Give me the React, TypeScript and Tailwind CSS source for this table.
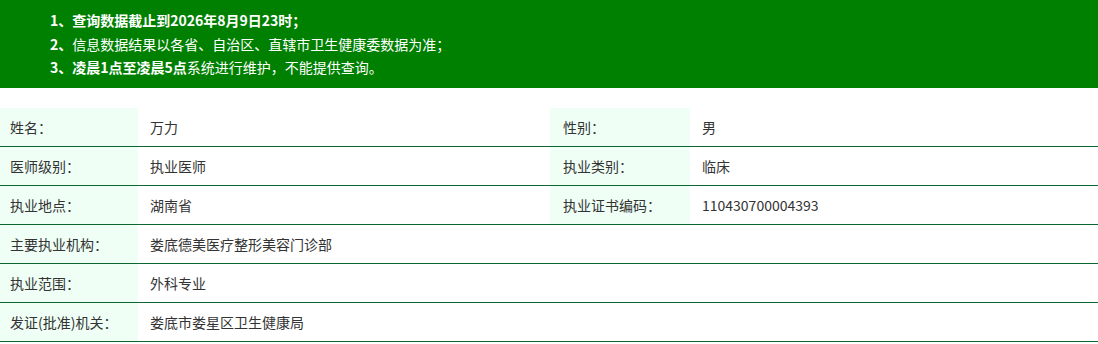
import React from "react";

const font = { fontFamily: '"Noto Sans CJK SC", "Noto Sans", sans-serif' };

type Row =
  | { type: "pair"; l1: string; v1: string; l2: string; v2: string }
  | { type: "single"; l: string; v: string };

const rows: Row[] = [
  { type: "pair", l1: "姓名：", v1: "万力", l2: "性别：", v2: "男" },
  { type: "pair", l1: "医师级别：", v1: "执业医师", l2: "执业类别：", v2: "临床" },
  { type: "pair", l1: "执业地点：", v1: "湖南省", l2: "执业证书编码：", v2: "110430700004393" },
  { type: "single", l: "主要执业机构：", v: "娄底德美医疗整形美容门诊部" },
  { type: "single", l: "执业范围：", v: "外科专业" },
  { type: "single", l: "发证(批准)机关：", v: "娄底市娄星区卫生健康局" },
];

export default function App() {
  return (
    <div className="w-[1098px] h-[344px] bg-white text-[14px] text-[#333]" style={font}>
      <div className="h-[88px] bg-[#008000] text-white flex flex-col pt-[9px] pl-[50px] leading-[23.5px]">
        <div className="font-bold">1、查询数据截止到2026年8月9日23时；</div>
        <div>
          <span className="font-bold">2、</span>信息数据结果以各省、自治区、直辖市卫生健康委数据为准；
        </div>
        <div>
          <span className="font-bold">3、凌晨1点至凌晨5点</span>系统进行维护，不能提供查询。
        </div>
      </div>
      <div className="mt-[20px]">
        {rows.map((r, i) => (
          <div key={i} className="flex h-[39px] border-b border-[#0b6631]">
            {r.type === "pair" ? (
              <>
                <div className="w-[138px] bg-[#effff6] pl-[10px] flex items-center">{r.l1}</div>
                <div className="w-[412px] pl-[12px] flex items-center">{r.v1}</div>
                <div className="w-[140px] bg-[#effff6] pl-[13px] flex items-center">{r.l2}</div>
                <div className="flex-1 pl-[12px] flex items-center">{r.v2}</div>
              </>
            ) : (
              <>
                <div className="w-[138px] bg-[#effff6] pl-[10px] flex items-center">{r.l}</div>
                <div className="flex-1 pl-[12px] flex items-center">{r.v}</div>
              </>
            )}
          </div>
        ))}
      </div>
    </div>
  );
}
